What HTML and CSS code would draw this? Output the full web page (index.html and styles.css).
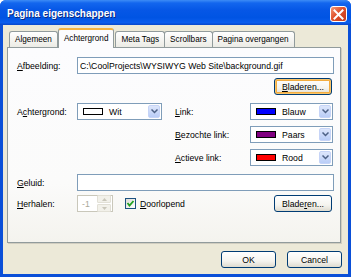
FILE: index.html
```html
<!DOCTYPE html>
<html lang="nl">
<head>
    <meta charset="utf-8">
    <title>Pagina eigenschappen</title>
    <link rel="stylesheet" href="styles.css">
</head>
<body>
    <div class="venster">
        <div class="titelbalk">
            <span class="titel">Pagina eigenschappen</span>
            <button class="sluiten">
                <svg width="11" height="11" viewBox="0 0 11 11">
                    <path d="M1.5 1.5 L9.5 9.5 M9.5 1.5 L1.5 9.5" stroke="#fff" stroke-width="2" stroke-linecap="square"/>
                </svg>
            </button>
        </div>
        <div class="inhoud">
            <div class="tabs">
                <div class="tab">Algemeen</div>
                <div class="tab actief">Achtergrond</div>
                <div class="tab">Meta Tags</div>
                <div class="tab">Scrollbars</div>
                <div class="tab">Pagina overgangen</div>
            </div>
            <div class="paneel">
                <div class="rij">
                    <label class="label"><u>A</u>fbeelding:</label>
                    <input class="veld" type="text" value="C:\CoolProjects\WYSIWYG Web Site\background.gif">
                </div>
                <div class="rij rechts">
                    <button class="knop focus"><u>B</u>laderen...</button>
                </div>
                <div class="kleuren">
                    <div class="kleurrij">
                        <div class="links">
                            <label class="label">A<u>c</u>htergrond:</label>
                            <div class="combo smal">
                                <span class="staal" style="background:#fff"></span>
                                <span class="naam">Wit</span>
                                <span class="pijl"><svg width="7" height="5" viewBox="0 0 7 5"><path d="M0.5 0.5 L3.5 3.5 L6.5 0.5" fill="none" stroke="#4d6185" stroke-width="1.5"/></svg></span>
                            </div>
                        </div>
                        <div class="rechterdeel">
                            <label class="label2"><u>L</u>ink:</label>
                            <div class="combo">
                                <span class="staal" style="background:#0000ff"></span>
                                <span class="naam">Blauw</span>
                                <span class="pijl"><svg width="7" height="5" viewBox="0 0 7 5"><path d="M0.5 0.5 L3.5 3.5 L6.5 0.5" fill="none" stroke="#4d6185" stroke-width="1.5"/></svg></span>
                            </div>
                        </div>
                    </div>
                    <div class="kleurrij">
                        <div class="links"></div>
                        <div class="rechterdeel">
                            <label class="label2"><u>B</u>ezochte link:</label>
                            <div class="combo">
                                <span class="staal" style="background:#800080"></span>
                                <span class="naam">Paars</span>
                                <span class="pijl"><svg width="7" height="5" viewBox="0 0 7 5"><path d="M0.5 0.5 L3.5 3.5 L6.5 0.5" fill="none" stroke="#4d6185" stroke-width="1.5"/></svg></span>
                            </div>
                        </div>
                    </div>
                    <div class="kleurrij">
                        <div class="links"></div>
                        <div class="rechterdeel">
                            <label class="label2"><u>A</u>ctieve link:</label>
                            <div class="combo">
                                <span class="staal" style="background:#ff0000"></span>
                                <span class="naam">Rood</span>
                                <span class="pijl"><svg width="7" height="5" viewBox="0 0 7 5"><path d="M0.5 0.5 L3.5 3.5 L6.5 0.5" fill="none" stroke="#4d6185" stroke-width="1.5"/></svg></span>
                            </div>
                        </div>
                    </div>
                </div>
                <div class="rij geluid">
                    <label class="label"><u>G</u>eluid:</label>
                    <input class="veld" type="text" value="">
                </div>
                <div class="rij herhalen">
                    <label class="label"><u>H</u>erhalen:</label>
                    <div class="spinner">
                        <span class="waarde">-1</span>
                        <span class="pijltjes">
                            <span class="op"><svg width="5" height="3" viewBox="0 0 5 3"><path d="M0 3 L2.5 0 L5 3Z" fill="#c9c7ba"/></svg></span>
                            <span class="neer"><svg width="5" height="3" viewBox="0 0 5 3"><path d="M0 0 L2.5 3 L5 0Z" fill="#c9c7ba"/></svg></span>
                        </span>
                    </div>
                    <span class="vinkje">
                        <svg width="9" height="9" viewBox="0 0 9 9"><path d="M1.5 4 L3.5 6.5 L7.5 2" fill="none" stroke="#21a121" stroke-width="1.8"/></svg>
                    </span>
                    <span class="vinktekst"><u>D</u>oorlopend</span>
                    <button class="knop duw">Blade<u>r</u>en...</button>
                </div>
            </div>
            <div class="onderkant">
                <button class="knop groot">OK</button>
                <button class="knop groot">Cancel</button>
            </div>
        </div>
    </div>
</body>
</html>
```

FILE: styles.css
```css
body {
    margin: 0;
    font-family: "Liberation Sans", Arial, sans-serif;
    font-size: 8.7px;
    background: #fff;
}
.venster {
    width: 351px;
    height: 277px;
    box-sizing: border-box;
    display: flex;
    flex-direction: column;
    background: #0a4fd8;
    border-radius: 6px 6px 0 0;
    overflow: hidden;
}
.titelbalk {
    height: 25px;
    display: flex;
    align-items: center;
    justify-content: space-between;
    padding: 0 4px 0 7px;
    background: linear-gradient(#3d8cf6 0%, #1366ee 12%, #0657e6 40%, #0054e3 70%, #0a5ded 90%, #0847c9 100%);
}
.titel {
    color: #fff;
    font-weight: bold;
    font-size: 10px;
    text-shadow: 1px 1px 0 #0b2a80;
    margin-top: 1px;
}
.sluiten {
    width: 17px;
    height: 16px;
    margin-top: 3px;
    padding: 0;
    border: 1px solid #fff;
    border-radius: 3px;
    background: linear-gradient(135deg, #f29a7a 0%, #e0522c 45%, #c4391a 100%);
    display: flex;
    align-items: center;
    justify-content: center;
}
.inhoud {
    flex: 1;
    margin: 0 3px 3px 3px;
    background: #ece9d8;
    display: flex;
    flex-direction: column;
    padding: 3px 7px 0 4px;
}
.tabs {
    display: flex;
    align-items: flex-end;
    height: 19px;
    padding-left: 2px;
    position: relative;
    z-index: 1;
}
.tab {
    height: 15px;
    line-height: 15px;
    padding: 0 5px;
    font-size: 8.2px;
    border: 1px solid #919b9c;
    border-bottom: none;
    border-radius: 3px 3px 0 0;
    background: linear-gradient(#fff, #ecebe5);
    margin-right: -1px;
}
.tab.actief {
    height: 18px;
    line-height: 17px;
    border-top: 2px solid #f5b441;
    background: #fcfcfe;
    margin: 0 1px 0 1px;
    padding: 0 5px;
    position: relative;
    top: 1px;
}
.paneel {
    height: 196px;
    border: 1px solid #919b9c;
    box-shadow: 1px 1px 0 #d0cdc0;
    background: linear-gradient(#fcfcfe 0%, #fbfbfa 70%, #f4f3ee 100%);
    padding: 9px 6px 0 9px;
    box-sizing: border-box;
}
.rij {
    display: flex;
    align-items: center;
}
.rechts {
    justify-content: flex-end;
    margin-top: 4px;
    padding-right: 2px;
}
.label {
    width: 60px;
}
.label2 {
    width: 75px;
}
.veld {
    flex: 1;
    height: 17px;
    box-sizing: border-box;
    border: 1px solid #7f9db9;
    font: inherit;
    padding: 0 2px;
    background: #fff;
    color: #000;
}
.knop {
    font: inherit;
    color: #000;
    border: 1px solid #003c74;
    border-radius: 3px;
    background: linear-gradient(#fff 0%, #f5f4ef 60%, #dedbcf 100%);
    height: 17px;
    width: 58px;
    padding: 0;
}
.knop.focus {
    box-shadow: inset 0 0 0 1px #f9c56b, inset 0 0 0 2px #f3ac3f;
}
.kleuren {
    margin-top: 8px;
    display: flex;
    flex-direction: column;
    gap: 6px;
}
.kleurrij {
    display: flex;
    height: 17px;
}
.links {
    display: flex;
    align-items: center;
    width: 158px;
}
.rechterdeel {
    display: flex;
    align-items: center;
}
.combo {
    width: 83px;
    height: 17px;
    box-sizing: border-box;
    border: 1px solid #7f9db9;
    background: #fff;
    display: flex;
    align-items: center;
    padding: 1px;
}
.combo.smal {
    width: 85px;
}
.staal {
    width: 18px;
    height: 5px;
    border: 1px solid #000;
    margin-left: 4px;
}
.naam {
    margin-left: 6px;
    flex: 1;
}
.pijl {
    width: 12px;
    height: 13px;
    border-radius: 2px;
    background: linear-gradient(#dde6fb, #b9cdf7);
    border: 1px solid #c6d4f7;
    box-sizing: border-box;
    display: flex;
    align-items: center;
    justify-content: center;
}
.geluid {
    margin-top: 8px;
}
.herhalen {
    margin-top: 4px;
}
.spinner {
    width: 36px;
    height: 17px;
    box-sizing: border-box;
    border: 1px solid #c9c7ba;
    background: #fff;
    display: flex;
    align-items: center;
    justify-content: space-between;
    padding: 1px;
}
.waarde {
    color: #aca899;
    margin-left: 3px;
}
.pijltjes {
    display: flex;
    flex-direction: column;
    gap: 1px;
}
.op, .neer {
    width: 12px;
    height: 6px;
    background: #f2f1ea;
    border: 1px solid #e2e0d6;
    border-radius: 1px;
    display: flex;
    align-items: center;
    justify-content: center;
}
.vinkje {
    width: 11px;
    height: 11px;
    box-sizing: border-box;
    border: 1px solid #1c5180;
    background: linear-gradient(135deg, #dcdcd7, #fff);
    margin-left: 12px;
    display: flex;
    align-items: center;
    justify-content: center;
}
.vinktekst {
    margin-left: 4px;
}
.duw {
    margin-left: auto;
    margin-right: 2px;
}
.onderkant {
    display: flex;
    justify-content: flex-end;
    gap: 11px;
    margin: 8px -1px 0 0;
}
.knop.groot {
    width: 55px;
    height: 17px;
}
```
